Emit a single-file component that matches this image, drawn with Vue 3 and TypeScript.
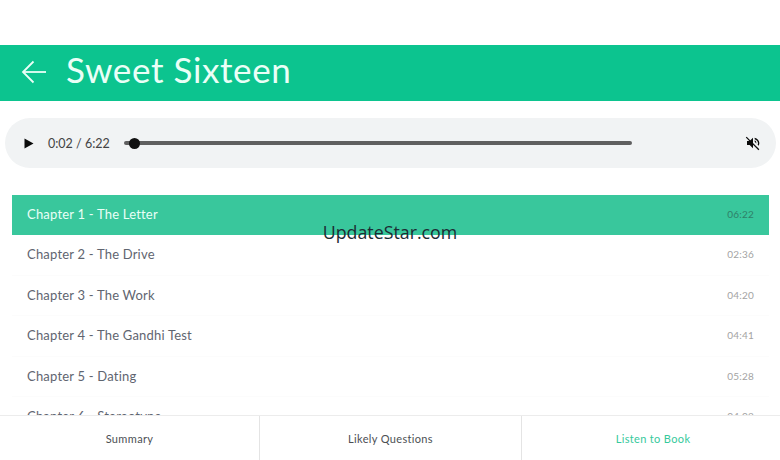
<template>
  <div class="page">
    <header class="top-bar">
      <svg class="back" width="26" height="24" viewBox="0 0 26 24" fill="none" stroke="#eafff7" stroke-width="1.8">
        <path d="M25 12H2" />
        <path d="M12.5 1.5L2 12l10.5 10.5" />
      </svg>
      <h1 class="title">Sweet Sixteen</h1>
    </header>

    <div class="player">
      <svg class="play" width="10" height="11" viewBox="0 0 10 11"><path d="M0.5 0.5L9.500 5.500L0.5 10.500Z" fill="#0b0b0b" /></svg>
      <span class="time">0:02 / 6:22</span>
      <div class="track">
        <div class="knob"></div>
      </div>
      <svg class="mute" width="16" height="16" viewBox="0 0 24 24" fill="#0b0b0b">
        <path d="M3 9v6h4l5 5V4L7 9H3z" />
        <path d="M14.500 4.300v2.100c2.900.9 5 3.500 5 5.600 0 .9-.2 1.800-.6 2.600l1.500 1.500c.7-1.200 1.100-2.600 1.100-4.100 0-3.400-3-7-7-7.700z" />
        <path d="M14.500 8v2.200l2.400 2.400c.1-.2.1-.4.1-.6 0-1.800-1-3.300-2.500-4z" />
        <path d="M2.500 2.500L1.200 3.800l19 19 1.300-1.300z" />
      </svg>
    </div>

    <ul class="chapters">
      <li
        v-for="(ch, i) in chapters"
        :key="ch.name"
        class="chapter"
        :class="{ active: i === 0 }"
      >
        <span class="name">{{ ch.name }}</span>
        <span class="length">{{ ch.length }}</span>
      </li>
    </ul>

    <nav class="tabs">
      <div v-for="tab in tabs" :key="tab" class="tab" :class="{ current: tab === 'Listen to Book' }">{{ tab }}</div>
    </nav>

    <div class="watermark">UpdateStar.com</div>
  </div>
</template>

<script setup lang="ts">
const chapters = [
  { name: 'Chapter 1 - The Letter', length: '06:22' },
  { name: 'Chapter 2 - The Drive', length: '02:36' },
  { name: 'Chapter 3 - The Work', length: '04:20' },
  { name: 'Chapter 4 - The Gandhi Test', length: '04:41' },
  { name: 'Chapter 5 - Dating', length: '05:28' },
  { name: 'Chapter 6 - Stereotype', length: '04:02' }
]

const tabs = ['Summary', 'Likely Questions', 'Listen to Book']
</script>

<style>
body {
  background: #fff;
}
</style>

<style scoped>
.page {
  position: relative;
  width: 780px;
  height: 460px;
  overflow: hidden;
  background: #fff;
  padding-top: 45px;
  box-sizing: border-box;
  display: flex;
  flex-direction: column;
  font-family: "Lato", "Noto Sans", sans-serif;
}

.top-bar {
  height: 56px;
  flex-shrink: 0;
  background: #0cc48f;
  display: flex;
  align-items: center;
  padding-left: 21px;
  gap: 19px;
}

.back {
  margin-bottom: 3px;
}

.title {
  margin: 0 0 8px;
  font-size: 35px;
  font-weight: 400;
  letter-spacing: 0.6px;
  color: #eafff7;
}

.player {
  margin: 17px 4px 0 5px;
  height: 50px;
  flex-shrink: 0;
  border-radius: 25px;
  background: #f1f3f4;
  display: flex;
  align-items: center;
  padding-left: 19px;
  padding-right: 15px;
}

.time {
  margin-left: 14px;
  font-size: 12.500px;
  color: #444;
  width: 76px;
  flex-shrink: 0;
}

.track {
  position: relative;
  width: 508px;
  height: 4px;
  background: #5f5f5f;
  border-radius: 2px;
}

.knob {
  position: absolute;
  left: 5px;
  top: -3.500px;
  width: 11px;
  height: 11px;
  border-radius: 50%;
  background: #111;
}

.mute {
  margin-left: auto;
}

.chapters {
  list-style: none;
  margin: 27px 11px 0 12px;
  padding: 0;
}

.chapter {
  height: 40.500px;
  padding: 0 15px 1px;
  display: flex;
  align-items: center;
  justify-content: space-between;
  font-size: 13px;
  letter-spacing: 0.2px;
  color: #5f6570;
  border-bottom: 1px solid #fcfcfc;
  box-sizing: border-box;
}

.chapter.active {
  height: 40px;
  padding-bottom: 3px;
  background: #39c79c;
  color: #eafff7;
  border-bottom: none;
}

.length {
  font-size: 10px;
  color: #a3a3a3;
}

.active .length {
  color: #2f7f68;
}

.tabs {
  position: absolute;
  left: 0;
  right: 0;
  bottom: 0;
  height: 45px;
  display: grid;
  grid-template-columns: 259px 262px 1fr;
  background: #fff;
  border-top: 1px solid #ececec;
  box-sizing: border-box;
}

.tab {
  display: flex;
  align-items: center;
  justify-content: center;
  font-size: 11px;
  letter-spacing: 0.35px;
  color: #4c4f54;
  border-left: 1px solid #e4e4e4;
}

.tab:first-child {
  border-left: none;
}

.tab.current {
  color: #36c99c;
  padding-left: 4px;
}

.watermark {
  position: absolute;
  left: 0;
  right: 0;
  top: 220px;
  text-align: center;
  font-family: "Open Sans", sans-serif;
  font-size: 17.800px;
  color: #1c2b33;
}
</style>
